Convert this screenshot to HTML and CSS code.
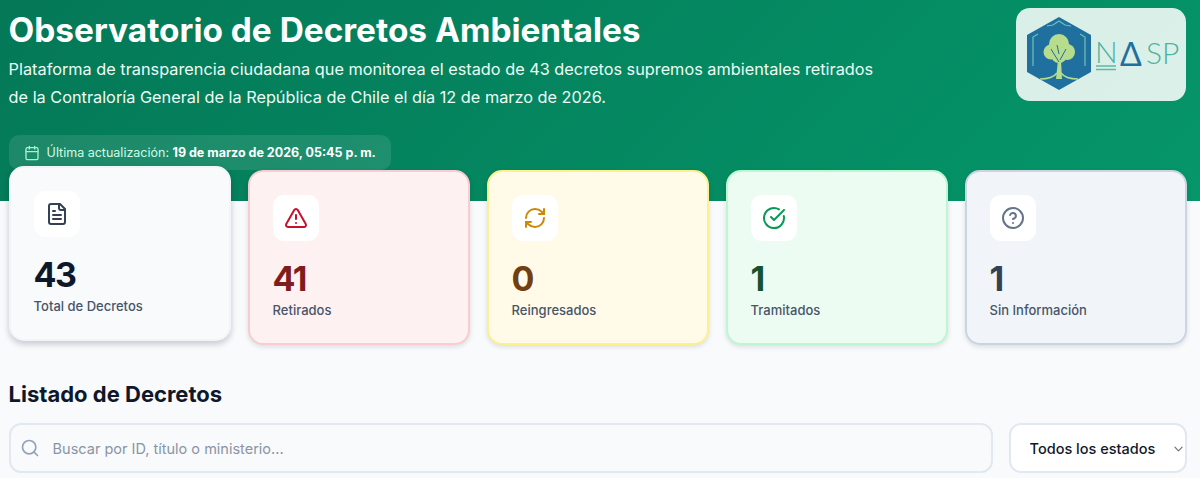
FILE: index.html
```html
<!DOCTYPE html>
<html lang="es">
<head>
<meta charset="utf-8">
<title>Observatorio de Decretos Ambientales</title>
<link rel="stylesheet" href="styles.css">
</head>
<body>
<header class="hero">
  <div class="hero-top">
    <div class="hero-text">
      <h1>Observatorio de Decretos Ambientales</h1>
      <p>Plataforma de transparencia ciudadana que monitorea el estado de 43 decretos supremos ambientales retirados de la Contraloría General de la República de Chile el día 12 de marzo de 2026.</p>
    </div>
    <div class="logo">
      <svg width="170" height="93" viewBox="0 0 170 93" role="img" aria-label="NASP">
        <path d="M43 9 75 27V64L43 82 11 64V27Z" fill="#1f6f9f"/>
        <path d="M17 58V29L22 26M69 58V29L64 26M31 18 37 17 43 13 49 17 55 18" fill="none" stroke="#6fc3b0" stroke-width="1.200"/>
        <circle cx="43" cy="36" r="10" fill="#b7dc8e"/>
        <circle cx="35" cy="44" r="7.500" fill="#b7dc8e"/>
        <circle cx="51" cy="44" r="8" fill="#b7dc8e"/>
        <circle cx="43" cy="47" r="8" fill="#b7dc8e"/>
        <path d="M40 71 42 52H45L46 71Z" fill="#b7dc8e"/>
        <path d="M24 71C33 71 38 69 41 65M62 71C53 71 48 69 45 65" fill="none" stroke="#b7dc8e" stroke-width="1.600"/>
        <path d="M43 54 38 46 35 41M44 52 50 41M43 46 41 37" fill="none" stroke="#1f6f9f" stroke-width="1"/>
        <path d="M80 58H100M80 61.500H100" fill="none" stroke="#5fb8a2" stroke-width="1.500"/>
        <text x="79" y="55" class="logo-l">N</text>
        <text x="104" y="58" class="logo-a">Δ</text>
        <text x="130" y="56" class="logo-s">S</text>
        <text x="146" y="56" class="logo-s">P</text>
      </svg>
    </div>
  </div>
  <div class="updated">
    <svg class="updated-icon" viewBox="0 0 24 24" fill="none" stroke="currentColor" stroke-width="2" stroke-linecap="round" stroke-linejoin="round"><rect x="3" y="4" width="18" height="18" rx="2"/><path d="M16 2v4M8 2v4M3 10h18"/></svg>
    <span>Última actualización: <strong>19 de marzo de 2026, 05:45 p. m.</strong></span>
  </div>
</header>

<main class="content">
  <section class="stats">
    <article class="card card-total">
      <div class="card-icon icon-total">
        <svg viewBox="0 0 24 24" fill="none" stroke="currentColor" stroke-width="2" stroke-linecap="round" stroke-linejoin="round"><path d="M15 2H6a2 2 0 0 0-2 2v16a2 2 0 0 0 2 2h12a2 2 0 0 0 2-2V7Z"/><path d="M14 2v4a2 2 0 0 0 2 2h4M10 9H8M16 13H8M16 17H8"/></svg>
      </div>
      <div class="card-num num-total">43</div>
      <div class="card-label">Total de Decretos</div>
    </article>
    <article class="card card-red">
      <div class="card-icon icon-red">
        <svg viewBox="0 0 24 24" fill="none" stroke="currentColor" stroke-width="2" stroke-linecap="round" stroke-linejoin="round"><path d="m21.730 18-8-14a2 2 0 0 0-3.480 0l-8 14A2 2 0 0 0 4 21h16a2 2 0 0 0 1.730-3"/><path d="M12 9v4M12 17h.01"/></svg>
      </div>
      <div class="card-num num-red">41</div>
      <div class="card-label">Retirados</div>
    </article>
    <article class="card card-yellow">
      <div class="card-icon icon-yellow">
        <svg viewBox="0 0 24 24" fill="none" stroke="currentColor" stroke-width="2" stroke-linecap="round" stroke-linejoin="round"><path d="M3 12a9 9 0 0 1 9-9 9.750 9.750 0 0 1 6.740 2.740L21 8"/><path d="M21 3v5h-5M21 12a9 9 0 0 1-9 9 9.750 9.750 0 0 1-6.740-2.740L3 16"/><path d="M8 16H3v5"/></svg>
      </div>
      <div class="card-num num-yellow">0</div>
      <div class="card-label">Reingresados</div>
    </article>
    <article class="card card-green">
      <div class="card-icon icon-green">
        <svg viewBox="0 0 24 24" fill="none" stroke="currentColor" stroke-width="2" stroke-linecap="round" stroke-linejoin="round"><path d="M21.800 10A10 10 0 1 1 17 3.340"/><path d="m9 11 3 3L22 4"/></svg>
      </div>
      <div class="card-num num-green">1</div>
      <div class="card-label">Tramitados</div>
    </article>
    <article class="card card-slate">
      <div class="card-icon icon-slate">
        <svg viewBox="0 0 24 24" fill="none" stroke="currentColor" stroke-width="2" stroke-linecap="round" stroke-linejoin="round"><circle cx="12" cy="12" r="10"/><path d="M9.090 9a3 3 0 0 1 5.830 1c0 2-3 3-3 3M12 17h.01"/></svg>
      </div>
      <div class="card-num num-slate">1</div>
      <div class="card-label">Sin Información</div>
    </article>
  </section>

  <h2>Listado de Decretos</h2>
  <div class="filters">
    <label class="search">
      <svg class="search-icon" viewBox="0 0 24 24" fill="none" stroke="currentColor" stroke-width="2" stroke-linecap="round" stroke-linejoin="round"><circle cx="11" cy="11" r="8"/><path d="m21 21-4.300-4.300"/></svg>
      <input type="text" placeholder="Buscar por ID, título o ministerio...">
    </label>
    <div class="status">
      <select class="status-select">
        <option>Todos los estados</option>
      </select>
      <svg class="status-arrow" viewBox="0 0 10 6" fill="none" stroke="currentColor" stroke-width="1.300" stroke-linecap="round" stroke-linejoin="round"><path d="m1 1 4 4 4-4"/></svg>
    </div>
  </div>
</main>
</body>
</html>
```

FILE: styles.css
```css
* { box-sizing: border-box; }
html, body { margin: 0; height: 100%; overflow: hidden; }
body {
  background: #f8fafc;
  color: #0f172a;
  font-family: "Inter", "Noto Sans", sans-serif;
}

.hero {
  height: 201px;
  padding: 8px 14px 0 8.600px;
  background: linear-gradient(135deg, #047857, #059669);
  color: #fff;
}
.hero-top { display: flex; justify-content: space-between; align-items: flex-start; }
.hero-text { width: 872px; }
h1 { margin: 0; font-size: 33.400px; line-height: 44px; font-weight: 700; }
.hero-text p { margin: 3px 0 0; font-size: 16.300px; line-height: 28px; color: #ecfdf5; }
.logo {
  width: 170px;
  height: 93px;
  background: rgba(255, 255, 255, .86);
  border-radius: 14px;
}
.logo svg { display: block; }
.logo-l, .logo-s { font-family: "Lato", sans-serif; font-weight: 300; font-size: 30px; fill: #4fb3a0; }
.logo-a { font-family: "Lato", sans-serif; font-weight: 400; font-size: 32px; fill: #1f6f9f; }

.updated {
  display: inline-flex;
  align-items: center;
  gap: 7px;
  height: 35px;
  margin-top: 24px;
  padding: 0 15px;
  background: rgba(255, 255, 255, .1);
  border-radius: 10px;
  font-size: 12.500px;
  color: #d1fae5;
}
.updated strong { color: #fff; font-weight: 700; }
.updated-icon { width: 16px; height: 16px; flex: none; color: #a7f3d0; }

.content { padding: 0 13.400px 0 8.600px; }
.stats {
  display: grid;
  grid-template-columns: repeat(5, 1fr);
  gap: 17px;
  margin-top: -31px;
}
.card {
  height: 175px;
  padding: 23px;
  border: 2px solid;
  border-radius: 15px;
  box-shadow: 0 2px 5px rgba(15, 23, 42, .12);
}
.card-total { margin-top: -4px; margin-bottom: 4px; background: #f8fafc; border-color: #f1f5f9; box-shadow: 0 3px 6px rgba(15, 23, 42, .22); }
.card-red { background: #fef1f1; border-color: #f8ccd0; }
.card-yellow { background: #fffbe8; border-color: #fef08a; }
.card-green { background: #edfcf3; border-color: #bbf7d0; }
.card-slate { background: #f1f5f9; border-color: #cbd5e1; }

.card-icon {
  width: 46px;
  height: 46px;
  display: flex;
  align-items: center;
  justify-content: center;
  background: #fff;
  border-radius: 11px;
}
.card-icon svg { width: 24px; height: 24px; }
.icon-total { color: #334155; }
.icon-red { color: #c8102e; }
.icon-yellow { color: #ca8a04; }
.icon-green { color: #0a9a55; }
.icon-slate { color: #64748b; }

.card-num { margin-top: 18px; font-size: 34px; line-height: 40px; font-weight: 700; letter-spacing: -1.500px; }
.num-total { color: #0f172a; }
.num-red { color: #7f1d1d; }
.num-yellow { color: #713f12; }
.num-green { color: #14532d; }
.num-slate { color: #334155; }
.card-label { margin-top: 1px; font-size: 13px; line-height: 20px; font-weight: 500; color: #475569; }

h2 { margin: 33px 0 0; font-size: 22px; line-height: 32px; font-weight: 700; color: #0f172a; }
.filters { display: flex; gap: 16px; margin-top: 13px; }
.search {
  flex: 1;
  height: 50px;
  display: flex;
  align-items: center;
  gap: 13px;
  padding: 0 14px 0 9px;
  background: #f8fafc;
  border: 2px solid #e2e8f0;
  border-radius: 12px;
}
.search-icon { width: 20px; height: 20px; flex: none; color: #94a3b8; }
.search input {
  flex: 1;
  padding: 0;
  border: 0;
  outline: 0;
  background: transparent;
  font-family: inherit;
  font-size: 14.500px;
  color: #0f172a;
}
.search input::placeholder { color: #8a94a3; opacity: 1; }
.status { position: relative; width: 178px; height: 50px; }
.status-select {
  display: block;
  width: 100%;
  height: 100%;
  padding: 0 20px 0 19px;
  appearance: none;
  background: #fff;
  border: 2px solid #e2e8f0;
  border-radius: 12px;
  font-family: inherit;
  font-size: 14.500px;
  font-weight: 500;
  color: #0f172a;
}
.status-arrow {
  position: absolute;
  right: 4px;
  top: 23px;
  width: 9px;
  height: 6px;
  color: #6b7280;
  pointer-events: none;
}
```
